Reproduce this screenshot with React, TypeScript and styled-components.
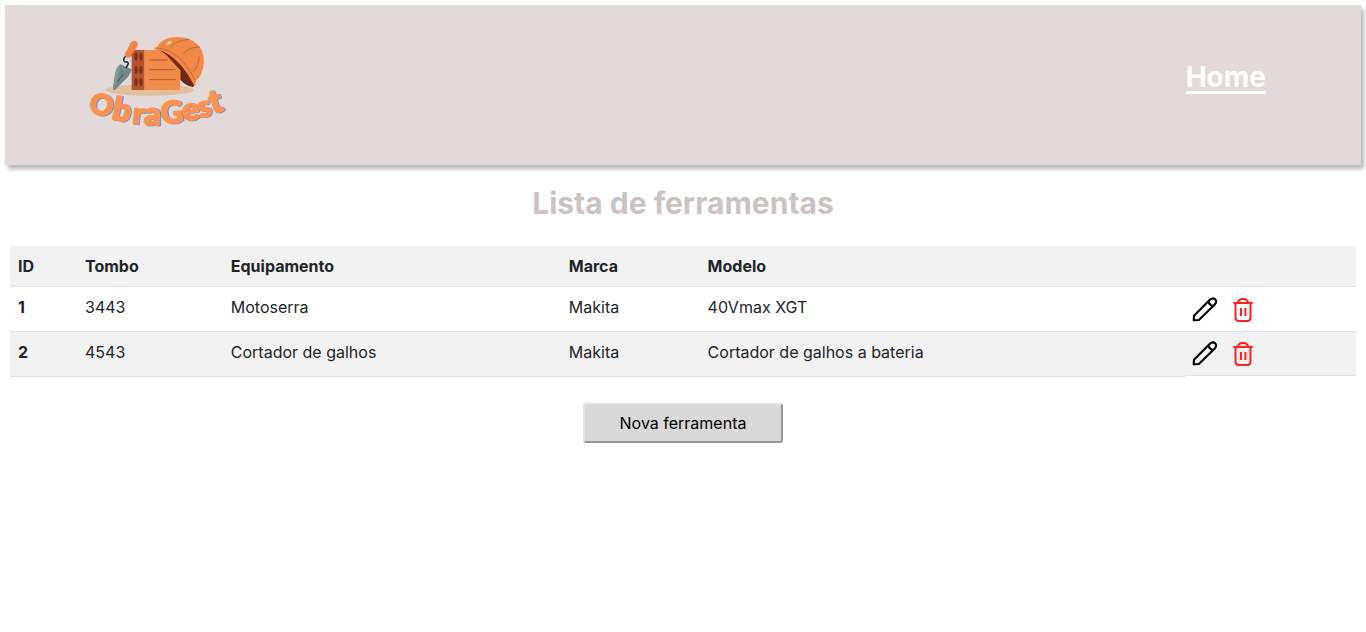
import React from 'react';
import styled, { createGlobalStyle } from 'styled-components';

const GlobalStyle = createGlobalStyle`
  * { box-sizing: border-box; }
  body { margin: 0; background: #fff; color: #212529; font: 400 16px/24px Inter, sans-serif; }
`;

const Header = styled.header`
  display: flex;
  justify-content: space-between;
  align-items: flex-start;
  height: 160px;
  margin: 5px 5px 0;
  padding: 23px 95px 0 75px;
  background: #e3d9d8;
  box-shadow: 3px 4px 4px 0 rgba(0, 0, 0, 0.28);
`;

const HomeLink = styled.a`
  margin-top: 28px;
  color: #fff;
  font-size: 28px;
  font-weight: 700;
  line-height: 43px;
  text-decoration: underline;
  text-decoration-thickness: 3px;
  text-underline-offset: 4px;
  text-decoration-skip-ink: none;
`;

const Title = styled.h1`
  margin: 18px 0 23px;
  color: #cbc2c2;
  font-size: 30px;
  font-weight: 700;
  line-height: 40px;
  text-align: center;
`;

const Table = styled.div`
  margin: 0 10px;
`;

const Row = styled.div<{ $striped?: boolean }>`
  display: grid;
  grid-template-columns: 67px 145.8px 338px 138.8px 485.4px 171px;
  align-items: start;
  --fill: ${(p) => (p.$striped ? '#f2f2f2' : '#fff')};
`;

const Cell = styled.div<{ $bold?: boolean; $height?: number }>`
  height: ${(p) => p.$height ?? 45}px;
  padding: 8px;
  background: var(--fill);
  border-bottom: 1px solid #dee2e6;
  font-weight: ${(p) => (p.$bold ? 700 : 400)};
  white-space: nowrap;
`;

const Actions = styled(Cell)<{ $top: number }>`
  display: flex;
  gap: 15px;
  padding: ${(p) => p.$top}px 7px 0;
`;

const Footer = styled.div`
  display: flex;
  justify-content: center;
  margin-top: 26px;
`;

const NewButton = styled.button`
  width: 200px;
  height: 40px;
  padding: 0;
  border: 2px solid;
  border-color: #e2e2e2 #979797 #979797 #e2e2e2;
  border-radius: 3px;
  background: #d9d9d9;
  color: #000;
  font: 400 16px/24px Inter, sans-serif;
`;

const LogoText = styled.text`
  font-family: Lato, sans-serif;
  font-weight: 900;
  text-anchor: middle;
`;

const letters: [string, number, number, number, number][] = [
  ['O', 57, 260, 14, 86],
  ['b', 119, 278, 12, 96],
  ['r', 172, 288, 6, 90],
  ['a', 216, 291, 2, 96],
  ['G', 278, 285, -5, 92],
  ['e', 336, 276, -10, 94],
  ['s', 379, 265, -14, 88],
  ['t', 415, 252, -17, 98],
];

const Letters = ({ color, dx, dy }: { color: string; dx: number; dy: number }) => (
  <g fill={color} stroke={color} strokeWidth="4" strokeLinejoin="round">
    {letters.map(([c, x, y, angle, size], i) => (
      <LogoText key={i} fontSize={size} transform={`translate(${x + dx} ${y + dy}) rotate(${angle})`}>
        {c}
      </LogoText>
    ))}
  </g>
);

const Logo = () => (
  <svg width="155" height="110" viewBox="0 0 465 330">
    <ellipse cx="209" cy="186" rx="132" ry="17" fill="#dfc09b" />
    <path d="M121 109 L155 124 Q151 143 128 163 L104 187 Q98 185 99 180 L105 141 Q108 119 121 109Z" fill="#718788" />
    <path d="M121 109 L113 151 L101 184 L99 180 L105 141 Q108 119 121 109Z" fill="#849797" />
    <path d="M130 139 L114 159" stroke="#3e565d" strokeWidth="3" strokeLinecap="round" />
    <path d="M137 84 Q127 95 134 101 Q149 101 143 111 L138 120" fill="none" stroke="#25383f" strokeWidth="5" />
    <path d="M155 66H194V186H155Z" fill="#b7542e" />
    <path d="M163 66 L154 88 L155 66Z" fill="#702910" />
    <path d="M159 39 Q170 36 174 46 Q174 54 167 63 L150 88 Q144 94 134 83 Q134 76 141 67 L150 48 Q153 41 159 39Z" fill="#f08447" />
    <path d="M193 66H300V186H193Z" fill="#f18b49" />
    <g fill="#7d301b">
      {[86, 126, 162].map((y) => (
        <React.Fragment key={y}>
          <ellipse cx="168" cy={y} rx="5" ry="12" />
          <ellipse cx="183" cy={y} rx="5" ry="12" />
        </React.Fragment>
      ))}
    </g>
    <path d="M209 96H262M209 125H286M209 155H286" stroke="#b9592d" strokeWidth="3" strokeLinecap="round" />
    <path d="M222 60 Q252 70 273 96 L301 127 V155 Q318 174 339 177 Q351 164 343 145 Q318 95 260 62Z" fill="#702910" />
    <path d="M230 58 Q246 28 289 27 Q342 27 365 66 Q379 101 363 138 Q357 154 345 158 L347 173 Q342 174 337 163 Q312 115 276 87 Q252 68 224 64 Q219 59 230 58Z" fill="#f08847" />
    <path d="M232 60 Q302 67 344 155 M272 58 Q285 38 326 34 M312 76 Q325 57 359 57 M341 129 Q356 111 358 87" fill="none" stroke="#c9652f" strokeWidth="3" strokeLinecap="round" />
    <path d="M258 52 Q262 42 272 38 Q277 40 270 47 Z" fill="#ffe6ce" />
    <Letters color="#b9aeb2" dx={3} dy={2} />
    <Letters color="#6c8db6" dx={4} dy={1} />
    <Letters color="#ff914d" dx={0} dy={0} />
  </svg>
);

const Pencil = () => (
  <svg width="26" height="25" viewBox="0 0 26 25" fill="none" stroke="#000" strokeWidth="2.1" strokeLinejoin="round">
    <path d="M1.7 23.3 L2 18.7 L17.9 2.8 Q20.7 .2 23.1 2.2 Q25.3 4.6 22.8 7.4 L6.9 23 L1.7 23.3Z M16.5 4.2 Q17.2 8 21.1 9" />
  </svg>
);

const Trash = () => (
  <svg width="20" height="25" viewBox="0 0 20 25" fill="none" stroke="#ff1f1f" strokeWidth="2">
    <path d="M.3 6H19.7M4.8 6Q5.4 2.1 10 2.1Q14.6 2.1 15.2 6M2.5 6V20.5Q2.5 24 6 24H14Q17.5 24 17.5 20.5V6M8 11V19M12.4 11V19" />
  </svg>
);

const tools = [
  ['1', '3443', 'Motoserra', 'Makita', '40Vmax XGT'],
  ['2', '4543', 'Cortador de galhos', 'Makita', 'Cortador de galhos a bateria'],
];

export default function App() {
  return (
    <>
      <GlobalStyle />
      <Header>
        <Logo />
        <HomeLink>Home</HomeLink>
      </Header>
      <Title>Lista de ferramentas</Title>
      <Table>
        <Row $striped>
          {['ID', 'Tombo', 'Equipamento', 'Marca', 'Modelo', ''].map((label) => (
            <Cell key={label} $bold $height={41}>{label}</Cell>
          ))}
        </Row>
        {tools.map((tool, index) => (
          <Row key={tool[0]} $striped={index % 2 === 1}>
            {tool.map((value, column) => (
              <Cell key={column} $bold={column === 0}>{value}</Cell>
            ))}
            <Actions $top={index ? 9 : 10} $height={index ? 44 : 45}>
              <Pencil />
              <Trash />
            </Actions>
          </Row>
        ))}
      </Table>
      <Footer>
        <NewButton>Nova ferramenta</NewButton>
      </Footer>
    </>
  );
}
